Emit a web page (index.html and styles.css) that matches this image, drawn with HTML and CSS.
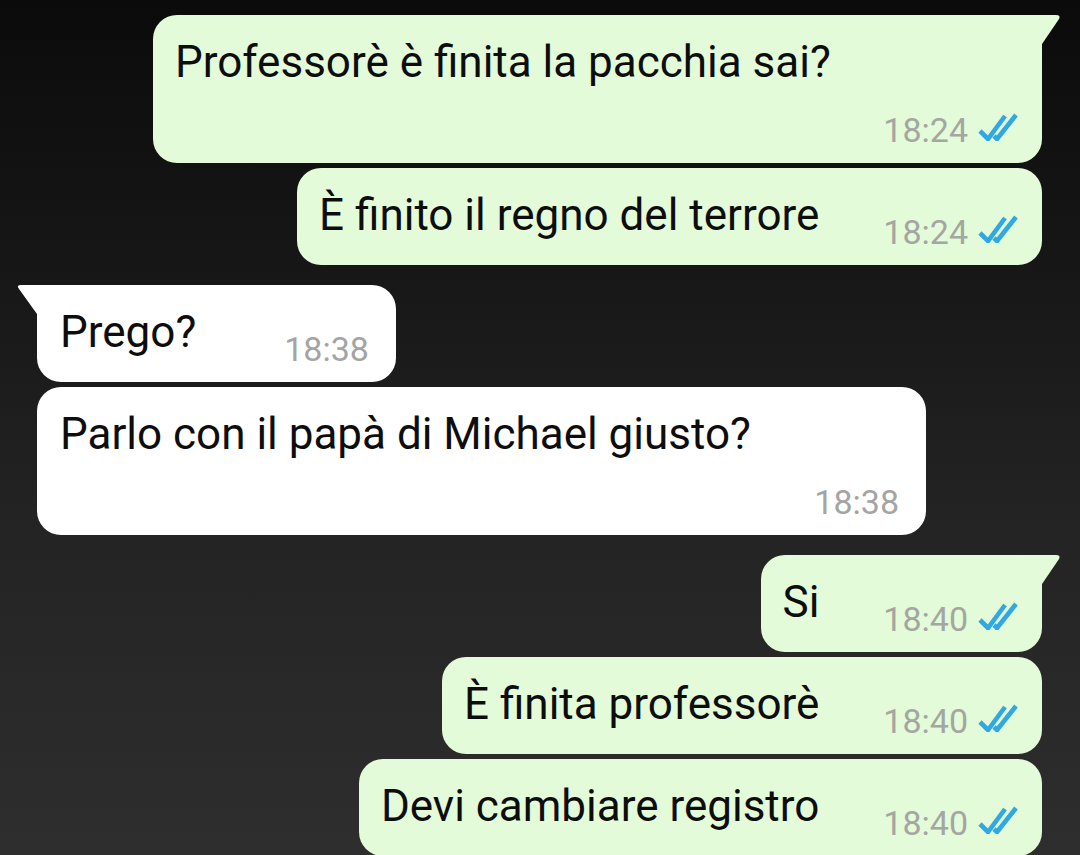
FILE: index.html
```html
<!DOCTYPE html>
<html lang="it">
<head>
    <meta charset="UTF-8">
    <meta name="viewport" content="width=device-width, initial-scale=1.0">
    <title>Chat</title>
    <link rel="stylesheet" href="styles.css">
</head>
<body>
    <main class="chat">
        <div class="msg out tail wide">
            <p class="text">Professorè è finita la pacchia sai?</p>
            <div class="meta">
                <span class="time">18:24</span>
                <svg class="ticks" viewBox="0 0 40 28"><path d="M2 18 L10 26 L27 3"/><path d="M16 23 L19 26 L38 2"/></svg>
            </div>
        </div>
        <div class="msg out">
            <p class="text">È finito il regno del terrore</p>
            <div class="meta">
                <span class="time">18:24</span>
                <svg class="ticks" viewBox="0 0 40 28"><path d="M2 18 L10 26 L27 3"/><path d="M16 23 L19 26 L38 2"/></svg>
            </div>
        </div>

        <div class="msg in tail short">
            <p class="text">Prego?</p>
            <div class="meta"><span class="time">18:38</span></div>
        </div>
        <div class="msg in wide">
            <p class="text">Parlo con il papà di Michael giusto?</p>
            <div class="meta"><span class="time">18:38</span></div>
        </div>

        <div class="msg out tail">
            <p class="text">Si</p>
            <div class="meta">
                <span class="time">18:40</span>
                <svg class="ticks" viewBox="0 0 40 28"><path d="M2 18 L10 26 L27 3"/><path d="M16 23 L19 26 L38 2"/></svg>
            </div>
        </div>
        <div class="msg out">
            <p class="text">È finita professorè</p>
            <div class="meta">
                <span class="time">18:40</span>
                <svg class="ticks" viewBox="0 0 40 28"><path d="M2 18 L10 26 L27 3"/><path d="M16 23 L19 26 L38 2"/></svg>
            </div>
        </div>
        <div class="msg out">
            <p class="text">Devi cambiare registro</p>
            <div class="meta">
                <span class="time">18:40</span>
                <svg class="ticks" viewBox="0 0 40 28"><path d="M2 18 L10 26 L27 3"/><path d="M16 23 L19 26 L38 2"/></svg>
            </div>
        </div>
    </main>
</body>
</html>
```

FILE: styles.css
```css
* {
    box-sizing: border-box;
}

html, body {
    height: 100%;
}

body {
    margin: 0;
    overflow: hidden;
    font-family: 'Roboto', 'Liberation Sans', sans-serif;
    background: linear-gradient(180deg, #0b0b0b 0%, #161616 30%, #232323 60%, #2e2e2e 100%);
}

.chat {
    display: flex;
    flex-direction: column;
    padding: 15px 38px 0 37px;
}

/* bolla base */
.msg {
    position: relative;
    display: flex;
    align-items: flex-end;
    padding: 21px 24px 14px 22px;
    border-radius: 24px;
    margin-top: 5px;
    color: #0d0d0d;
}

.msg.out {
    align-self: flex-end;
    background: #e3fbd8;
}

.msg.in {
    align-self: flex-start;
    background: #ffffff;
    padding-right: 27px;
    padding-left: 23px;
}

/* cambio di mittente */
.msg.tail {
    margin-top: 20px;
}

.chat > .msg:first-child {
    margin-top: 0;
}

/* code a fumetto */
.msg.out.tail {
    border-top-right-radius: 0;
}

.msg.in.tail {
    border-top-left-radius: 0;
}

.msg.tail::before {
    content: '';
    position: absolute;
    top: 0;
    width: 20px;
    height: 29px;
    background: inherit;
}

.msg.out.tail::before {
    right: -18px;
    width: 18px;
    clip-path: path('M0 0 H14 Q19 0 17 4 L0 29 Z');
}

.msg.in.tail::before {
    left: -20px;
    clip-path: path('M20 0 H4 Q-1 0 2 4 L20 29 Z');
}

.text {
    margin: 0 0 10px;
    font-size: 44px;
    line-height: 52px;
    white-space: nowrap;
}

.meta {
    display: flex;
    align-items: flex-start;
    gap: 10px;
    margin-left: 64px;
}

.msg.short .meta {
    margin-left: 88px;
}

.time {
    font-size: 34px;
    line-height: 38px;
    color: #a3a6a1;
}

.msg.in .time {
    color: #a4a4a4;
}

.ticks {
    width: 40px;
    height: 28px;
    margin-top: 2px;
    fill: none;
    stroke: #2fa8e4;
    stroke-width: 4.6;
    stroke-linecap: butt;
    stroke-linejoin: miter;
}

/* bolle con l'ora a capo */
.msg.wide {
    width: 889px;
    flex-direction: column;
    align-items: stretch;
}

.msg.wide .meta {
    align-self: flex-end;
    margin: 13px 0 0;
}
```
